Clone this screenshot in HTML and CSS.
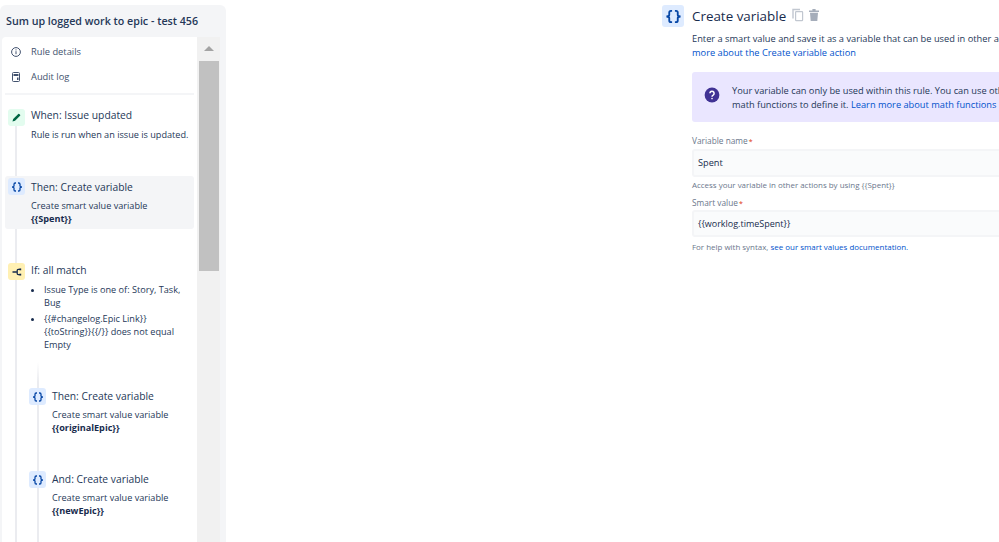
FILE: index.html
```html
<!DOCTYPE html>
<html lang="en">
<head>
<meta charset="utf-8">
<title>Create variable</title>
<link rel="stylesheet" href="styles.css">
</head>
<body>
<div class="page">
  <aside class="panel">
    <h2 class="panel-title">Sum up logged work to epic - test 456</h2>
    <div class="panel-body">
      <div class="list">
        <div class="nav">
          <div class="nav-row">
            <svg class="nav-icon" viewBox="0 0 12 12"><circle cx="6" cy="6" r="4.4" fill="none" stroke="#42526e" stroke-width="1"/><rect x="5.5" y="5.2" width="1" height="3" fill="#42526e"/><rect x="5.5" y="3.4" width="1" height="1" fill="#42526e"/></svg>
            <span>Rule details</span>
          </div>
          <div class="nav-row">
            <svg class="nav-icon" viewBox="0 0 12 12"><rect x="2.5" y="1.5" width="7" height="9" rx="1" fill="none" stroke="#42526e" stroke-width="1"/><rect x="3.5" y="3" width="5" height="2" fill="#42526e"/><rect x="7" y="6.5" width="1.5" height="2.5" fill="#42526e"/></svg>
            <span>Audit log</span>
          </div>
        </div>
        <div class="timeline">
          <div class="line"></div>
          <div class="item item-when">
            <span class="badge badge-green">
              <svg viewBox="0 0 12 12" width="11" height="11"><path d="M1.6 10.4 2.4 7.6 7.9 2.1a.8.8 0 0 1 1.1 0l.9.9a.8.8 0 0 1 0 1.1L4.4 9.6Z" fill="#006644"/></svg>
            </span>
            <div class="item-text">
              <div class="item-title">When: Issue updated</div>
              <div class="item-desc">Rule is run when an issue is updated.</div>
            </div>
          </div>
          <div class="item item-then selected">
            <span class="badge badge-blue">
              <svg class="braces" viewBox="0 0 12 12"><path d="M5 2H4.2Q3 2 3 3.2V5Q3 6 1 6 3 6 3 7V8.8Q3 10 4.2 10H5M7 2H7.8Q9 2 9 3.2V5Q9 6 11 6 9 6 9 7V8.8Q9 10 7.8 10H7"/></svg>
            </span>
            <div class="item-text">
              <div class="item-title">Then: Create variable</div>
              <div class="item-desc">Create smart value variable<br><b>{{Spent}}</b></div>
            </div>
          </div>
          <div class="item item-if">
            <span class="badge badge-yellow">
              <svg viewBox="0 0 12 12" width="12" height="12"><path d="M1.5 6h4M9.5 3.4H7.2a1 1 0 0 0-1 1v3.2a1 1 0 0 0 1 1h2.3" fill="none" stroke="#172b4d" stroke-width="1.3"/><rect x="8.4" y="2.5" width="1.8" height="1.8" fill="#172b4d"/><rect x="8.4" y="7.7" width="1.8" height="1.8" fill="#172b4d"/></svg>
            </span>
            <div class="item-text">
              <div class="item-title">If: all match</div>
              <ul class="conditions">
                <li>Issue Type is one of: Story, Task, Bug</li>
                <li>{{#changelog.Epic Link}}<br>{{toString}}{{/}} does not equal Empty</li>
              </ul>
            </div>
          </div>
          <div class="nested">
            <div class="line line-nested"></div>
            <div class="item item-nested">
              <span class="badge badge-blue">
                <svg class="braces" viewBox="0 0 12 12"><path d="M5 2H4.2Q3 2 3 3.2V5Q3 6 1 6 3 6 3 7V8.8Q3 10 4.2 10H5M7 2H7.8Q9 2 9 3.2V5Q9 6 11 6 9 6 9 7V8.8Q9 10 7.8 10H7"/></svg>
              </span>
              <div class="item-text">
                <div class="item-title">Then: Create variable</div>
                <div class="item-desc">Create smart value variable<br><b>{{originalEpic}}</b></div>
              </div>
            </div>
            <div class="item item-nested">
              <span class="badge badge-blue">
                <svg class="braces" viewBox="0 0 12 12"><path d="M5 2H4.2Q3 2 3 3.2V5Q3 6 1 6 3 6 3 7V8.8Q3 10 4.2 10H5M7 2H7.8Q9 2 9 3.2V5Q9 6 11 6 9 6 9 7V8.8Q9 10 7.8 10H7"/></svg>
              </span>
              <div class="item-text">
                <div class="item-title">And: Create variable</div>
                <div class="item-desc">Create smart value variable<br><b>{{newEpic}}</b></div>
              </div>
            </div>
          </div>
        </div>
      </div>
      <div class="scrollbar">
        <div class="arrow"></div>
        <div class="thumb"></div>
      </div>
    </div>
  </aside>
  <main class="detail">
    <header class="detail-head">
      <span class="badge badge-blue badge-large">
        <svg class="braces braces-large" viewBox="0 0 12 12"><path d="M5 2H4.2Q3 2 3 3.2V5Q3 6 1 6 3 6 3 7V8.8Q3 10 4.2 10H5M7 2H7.8Q9 2 9 3.2V5Q9 6 11 6 9 6 9 7V8.8Q9 10 7.8 10H7"/></svg>
      </span>
      <h1 class="detail-title">Create variable</h1>
      <svg class="tool" viewBox="0 0 12 14" width="12" height="14"><path d="M1 10.5V1.5h7" fill="none" stroke="#c1c7d0" stroke-width="1.4"/><rect x="3.6" y="3.6" width="7" height="9" rx=".6" fill="none" stroke="#c1c7d0" stroke-width="1.2"/></svg>
      <svg class="tool" viewBox="0 0 12 14" width="12" height="14"><path d="M1 2.6h10v1.3H1ZM4.4 1h3.2v1.6H4.4ZM2 4.8h8l-.7 8.2H2.7Z" fill="#a5adba"/></svg>
    </header>
    <div class="detail-body">
      <p class="intro">Enter a smart value and save it as a variable that can be used in other actions and rules. Learn<br><a href="#">more about the Create variable action</a></p>
      <div class="notice">
        <svg class="notice-icon" viewBox="0 0 16 16" width="16" height="16"><circle cx="8" cy="8" r="7.4" fill="#403294"/><path d="M5.9 6.3a2.1 2.1 0 1 1 3.2 1.8c-.7.4-1.1.8-1.1 1.6" fill="none" stroke="#fff" stroke-width="1.5"/><rect x="7.2" y="10.8" width="1.6" height="1.6" rx=".8" fill="#fff"/></svg>
        <p>Your variable can only be used within this rule. You can use other smart values or<br>math functions to define it. <a href="#">Learn more about math functions</a></p>
      </div>
      <label class="field-label">Variable name<span class="req">*</span></label>
      <div class="input input-name">Spent</div>
      <div class="help help-first">Access your variable in other actions by using {{Spent}}</div>
      <label class="field-label field-label-second">Smart value<span class="req">*</span></label>
      <div class="input input-value">{{worklog.timeSpent}}</div>
      <div class="help help-second">For help with syntax, <a href="#">see our smart values documentation.</a></div>
    </div>
  </main>
</div>
</body>
</html>
```

FILE: styles.css
```css
* { box-sizing: border-box; }
html, body { margin: 0; height: 100%; overflow: hidden; background: #fff; }
body { font-family: "Open Sans", "Noto Sans", sans-serif; color: #172b4d; }
a { color: #0052cc; text-decoration: none; }
.page { display: flex; height: 542px; width: 999px; overflow: hidden; }

.panel { width: 226px; flex: none; margin-top: 5px; background: #f4f5f7; border-radius: 6px 6px 0 0; display: flex; flex-direction: column; }
.panel-title { margin: 0; padding: 9px 0 0 6px; height: 32px; font-size: 10.7px; line-height: 15px; font-weight: 600; color: #253858; white-space: nowrap; }
.panel-body { flex: 1; display: flex; padding-left: 2px; min-height: 0; }
.list { width: 195px; background: #fff; border-radius: 4px 0 0 0; padding: 0 3px; overflow: hidden; }
.nav { height: 58px; border-bottom: 2px solid #f4f5f7; padding-top: 2px; }
.nav-row { height: 25px; display: flex; align-items: center; padding-left: 5px; font-size: 9.3px; color: #42526e; }
.nav-icon { width: 12px; height: 12px; margin-right: 9px; flex: none; }

.timeline { position: relative; }
.line { position: absolute; left: 10px; top: 14px; bottom: 0; width: 2px; background: #ebecf0; }
.line-nested { left: 32px; top: 0; background: linear-gradient(#fff, #ebecf0 20px); }
.item { position: relative; display: flex; padding-left: 3px; }
.item-text { margin-left: 6px; }
.item-title { font-size: 10.3px; line-height: 14px; color: #253858; white-space: nowrap; }
.item-desc { font-size: 9.15px; line-height: 13px; color: #253858; margin-top: 5px; white-space: nowrap; }
.item-desc b { font-weight: 700; color: #172b4d; }
.item-when { margin-top: 14px; height: 67px; }
.item-when .item-text { margin-top: -1px; }
.item-when .item-desc { margin-top: 6px; }
.item-then { height: 53px; padding-top: 2px; }
.item-then .item-text { margin-top: 2px; }
.item-nested .item-text { margin-top: 1px; }
.selected { background: #f4f5f7; border-radius: 3px; }
.item-if { margin-top: 34px; }
.conditions { margin: 6px 0 0; padding: 0 0 0 13px; font-size: 9.15px; line-height: 13px; color: #253858; width: 150px; list-style: disc; }
.conditions li { margin-bottom: 3px; }
.conditions li::marker { font-size: 9px; color: #172b4d; }

.nested { position: relative; height: 200px; margin-top: 8px; }
.item-nested { padding-left: 24px; padding-top: 26px; height: 83px; }

.badge { width: 17px; height: 17px; flex: none; border-radius: 3px; display: inline-flex; align-items: center; justify-content: center; position: relative; }
.badge-green { background: #e3fcef; }
.badge-blue { background: #deebff; }
.badge-yellow { background: #fff0b3; }
.braces { width: 12px; height: 12px; fill: none; stroke: #0747a6; stroke-width: 1.3; }
.badge-large { width: 22px; height: 22px; }
.braces-large { width: 17px; height: 17px; }

.scrollbar { width: 23px; background: #f1f1f1; flex: none; position: relative; display: flex; flex-direction: column; align-items: center; }
.arrow { margin-top: 9px; width: 0; height: 0; border-left: 5px solid transparent; border-right: 5px solid transparent; border-bottom: 5px solid #a3a3a3; }
.thumb { margin-top: 10px; width: 20px; height: 210px; background: #c1c1c1; }

.detail { margin-left: 436px; flex: 1; min-width: 0; overflow: hidden; padding-top: 5px; }
.detail-head { display: flex; align-items: center; height: 22px; }
.detail-title { margin: 0 0 0 8px; font-size: 13.4px; font-weight: 400; line-height: 23px; color: #172b4d; white-space: nowrap; }
.tool { margin-left: 6px; margin-top: -2px; }
.tool + .tool { margin-left: 4px; }
.detail-body { margin-left: 30px; width: 420px; }
.intro { margin: 5px 0 0; font-size: 9.27px; line-height: 14px; color: #253858; white-space: nowrap; }
.notice { margin-top: 12px; height: 50px; background: #eae6ff; border-radius: 3px; display: flex; padding: 12px 0 0 12px; }
.notice p { margin: 0 0 0 12px; font-size: 9.25px; line-height: 14px; color: #253858; white-space: nowrap; }
.notice-icon { flex: none; margin-top: 3px; }
.field-label { display: block; margin-top: 13px; font-size: 8.3px; line-height: 12px; font-weight: 500; color: #6b778c; }
.field-label-second { margin-top: 6px; }
.req { color: #de350b; margin-left: 1px; font-size: 7px; }
.input { margin-top: 1px; height: 28px; background: #fafbfc; border: 2px solid #f4f5f7; border-radius: 3px; padding-left: 4px; font-size: 9.2px; line-height: 24px; color: #172b4d; }
.input-value { margin-top: 0; height: 27px; font-size: 9px; line-height: 23px; }
.help { font-size: 7.95px; line-height: 12px; color: #6b778c; white-space: nowrap; }
.help-first { margin-top: 2px; }
.help-second { margin-top: 4px; }
```
